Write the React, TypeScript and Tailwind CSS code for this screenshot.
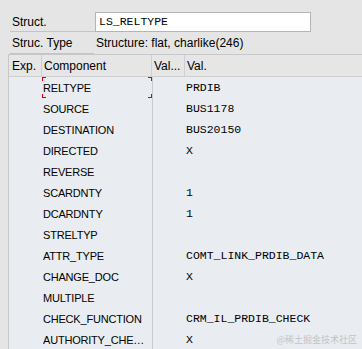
const rows: [string, string][] = [
  ["RELTYPE", "PRDIB"],
  ["SOURCE", "BUS1178"],
  ["DESTINATION", "BUS20150"],
  ["DIRECTED", "X"],
  ["REVERSE", ""],
  ["SCARDNTY", "1"],
  ["DCARDNTY", "1"],
  ["STRELTYP", ""],
  ["ATTR_TYPE", "COMT_LINK_PRDIB_DATA"],
  ["CHANGE_DOC", "X"],
  ["MULTIPLE", ""],
  ["CHECK_FUNCTION", "CRM_IL_PRDIB_CHECK"],
  ["AUTHORITY_CHECK", "X"],
];

function FocusCorners() {
  return (
    <>
      <span className="absolute left-0 top-0 w-[4px] h-[4px] border-l border-t border-[#e00000]" />
      <span className="absolute right-0 top-0 w-[4px] h-[4px] border-r border-t border-[#e00000]" />
      <span className="absolute left-0 bottom-0 w-[4px] h-[4px] border-l border-b border-[#e00000]" />
      <span className="absolute right-0 bottom-0 w-[4px] h-[4px] border-r border-b border-[#e00000]" />
    </>
  );
}

export default function App() {
  const mono = "font-['Liberation_Mono',monospace] text-[11.5px]";
  return (
    <div className="relative w-[362px] h-[349px] overflow-hidden bg-[#e5e5e5] text-black font-['Liberation_Sans',Arial,sans-serif] text-[12px] leading-none">
      <div className="pt-[12px] pl-[10px]">
        <div className="flex items-end h-[20px]">
          <div className="w-[85px] h-[20px] border-b border-[#c4c4c4] pl-[2px] flex items-center">Struct.</div>
          <div className={`w-[216px] h-[20px] bg-white border border-[#b4b4b4] flex items-center pl-[3px] ${mono}`}>
            LS_RELTYPE
          </div>
        </div>
        <div className="flex h-[22px]">
          <div className="w-[84px] border-b border-[#c4c4c4] pl-[2px] flex items-center">Struc. Type</div>
          <div className="pl-[2px] flex items-center">Structure: flat, charlike(246)</div>
        </div>
      </div>

      <div className="ml-[8px] border-l border-t border-[#c8c8c8]">
        <div className="flex h-[22px] bg-[#e6e6e6] border-b border-[#cfcfcf]">
          <div className="w-[33px] pl-[3px] flex items-center border-r border-[#cfcfcf]">Exp.</div>
          <div className="w-[110px] pl-[2px] flex items-center border-r border-[#cfcfcf]">Component</div>
          <div className="w-[33px] pl-[2px] flex items-center border-r border-[#cfcfcf]">Val...</div>
          <div className="flex-1 pl-[2px] flex items-center">Val.</div>
        </div>
        <div className="bg-[#e9edf1]">
          {rows.map(([name, val], i) => (
            <div key={name} className="flex h-[21px]">
              <div className="w-[33px]" />
              <div className="relative w-[111px] pl-[1px] flex items-center border-r border-[#cbcbcb]">
                <span className="block truncate w-[104px] text-[11px] tracking-[-0.2px] leading-[16px]">{name}</span>
                {i === 0 && <FocusCorners />}
              </div>
              <div className="w-[33px]" />
              <div className={`flex-1 flex items-center ${mono}`}>{val}</div>
            </div>
          ))}
        </div>
      </div>

      <div className="absolute right-[5px] bottom-[5px] text-[9px] text-[#c0c4c8] font-['Noto_Sans_CJK_SC',sans-serif]">
        @稀土掘金技术社区
      </div>
    </div>
  );
}
